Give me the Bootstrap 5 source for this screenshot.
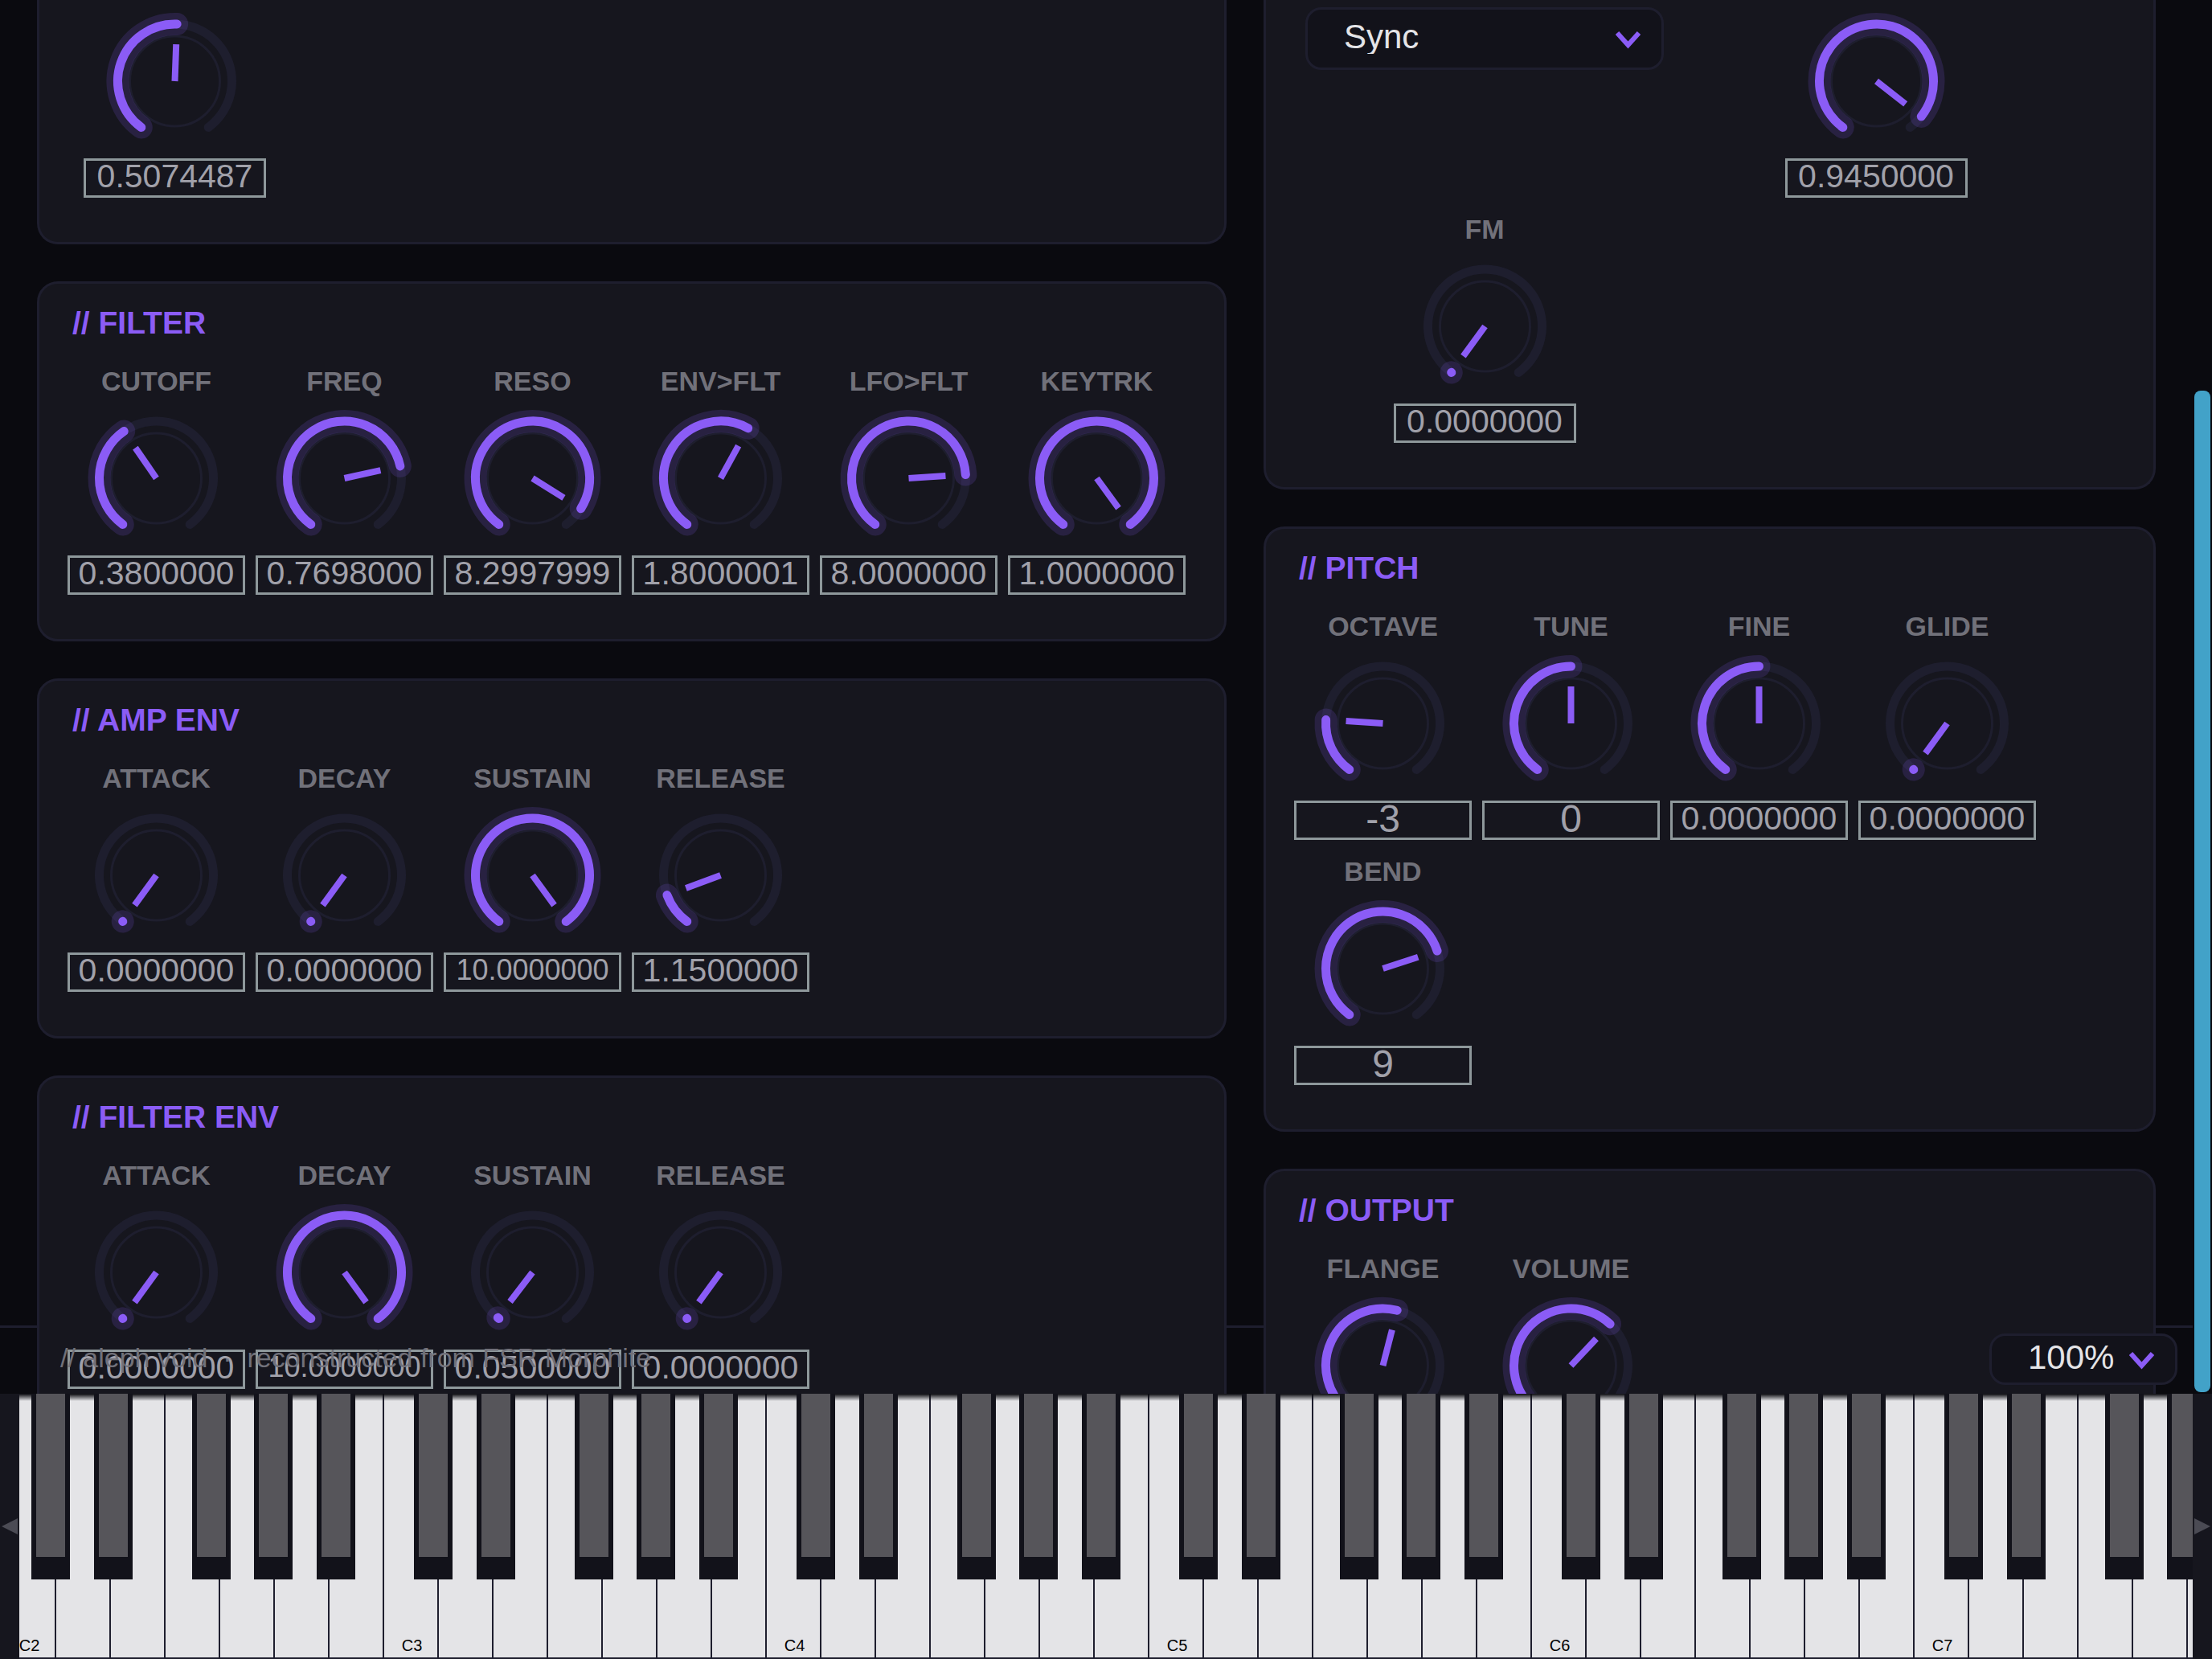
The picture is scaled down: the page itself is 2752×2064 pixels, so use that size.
<!DOCTYPE html>
<html lang="en">
<head>
<meta charset="utf-8">
<meta name="viewport" content="width=device-width, initial-scale=1">
<title>aleph void</title>
<link href="https://cdn.jsdelivr.net/npm/bootstrap@5.3.0/dist/css/bootstrap.min.css" rel="stylesheet">
<style>
  :root { --void: #0a0a0f; --panel: #16161e; --line: #1e1e2e; --accent: #8b5cf6; --field: #12121a; }
  body { background: var(--void); font-family: "Liberation Sans", Arial, sans-serif; line-height: 1; }
  main { min-height: 0; }
  .col-left { flex: 4 1 0; min-width: 0; }
  .col-right { flex: 3 1 0; min-width: 0; }
  .deck { gap: 46px; padding: 0 46px; z-index: 1; }
  .stack { gap: 46px; }
  .panel { background: var(--panel); border: 3px solid var(--line); border-radius: 26px; padding: 16px 35px 55px; }
  .panel-cut { border-top: 0; border-top-left-radius: 0; border-top-right-radius: 0; padding-top: 6px; }
  .panel h2 { color: var(--accent); font-size: 39px; font-weight: 700; line-height: 66px; margin: 0 6px 13px; }
  .knobs { column-gap: 13px; row-gap: 13px; }
  .knob { width: 221px; }
  .knob-title { color: #71717a; font-size: 34px; font-weight: 700; line-height: 52px; }
  .dial { height: 191px; }
  .dial svg { width: 221px; height: 191px; }
  .dial input { opacity: 0; cursor: pointer; }
  .readout { width: 100%; height: 49px; background: transparent; border: 3px solid #8e989b; border-radius: 0; color: #a1a1aa; font-size: 41px; text-align: center; padding: 0 0 5px; outline: 0; }
  .readout-whole { font-size: 48px; }
  .readout-long { font-size: 36px; }
  .slot-narrow { width: 267px; }
  .slot-wide { width: 474px; }
  .slot-narrow .knob, .slot-wide .knob { width: 227px; }
  .picker select { appearance: none; width: 100%; height: 100%; background: var(--field); border: 3px solid var(--line); border-radius: 20px; color: #e4e4e7; font-size: 42px; padding: 0 45px 5px; outline: 0; }
  .picker svg { right: 29px; top: 50%; transform: translateY(-50%); pointer-events: none; }
  .picker-mode { width: 446px; height: 78px; margin-top: 3px; }
  .picker-zoom { width: 234px; height: 64px; right: 19px; bottom: 11px; z-index: 3; }
  .foot-line { height: 85px; border-top: 3px solid var(--line); z-index: 0; }
  .foot-note { left: 75px; bottom: 25px; font-size: 34px; line-height: 40px; color: #71717a; z-index: 2; white-space: pre; }
  .track { width: 24px; padding: 486px 2px 2px; }
  .thumb { background: #42a2c8; border-radius: 8px; }
  .keyboard { height: 330px; }
  .shift { width: 24px; background: var(--panel); border: 0; padding: 0; z-index: 2; }
  .keys { background: #e4e4e7; }
  .strip { margin-left: -24px; }
  .octave { width: 476px; }
  .white-key { width: 68px; border-left: 2px solid var(--line); border-bottom: 2px solid var(--line); background: #e4e4e7; color: #000; padding: 0 0 1px 3px; font-size: 20px; line-height: 28px; }
  .black-key { width: 48px; height: 231px; top: 0; background: var(--field); padding: 0 6px 28px; z-index: 1; }
  .black-key::before { content: ""; display: block; height: 100%; background: #56555a; }
  .n1 { left: 39px; } .n2 { left: 117px; } .n3 { left: 239px; } .n4 { left: 316px; } .n5 { left: 394px; }
  .shade { height: 9px; background: linear-gradient(#0a0a0f, #0a0a0f00); }
</style>
<script src="https://cdn.jsdelivr.net/npm/bootstrap@5.3.0/dist/js/bootstrap.bundle.min.js"></script>
</head>
<body class="vh-100 d-flex flex-column overflow-hidden">

<main class="flex-fill d-flex overflow-hidden position-relative">
  <div class="flex-fill position-relative overflow-hidden">
    <div class="foot-line position-absolute bottom-0 start-0 end-0"></div>

    <div class="deck d-flex align-items-start position-relative">
      <div class="col-left stack d-flex flex-column">
        <section class="panel panel-cut">
          <div class="slot-narrow d-flex justify-content-center" data-knobs='[["","0.5074487",0.5074]]'></div>
        </section>
        <section class="panel">
          <h2>// FILTER</h2>
          <div class="knobs d-flex flex-wrap" data-knobs='[["CUTOFF","0.3800000",0.38],["FREQ","0.7698000",0.7698],["RESO","8.2997999",0.924],["ENV&gt;FLT","1.8000001",0.6],["LFO&gt;FLT","8.0000000",0.8],["KEYTRK","1.0000000",1]]'></div>
        </section>
        <section class="panel">
          <h2>// AMP ENV</h2>
          <div class="knobs d-flex flex-wrap" data-knobs='[["ATTACK","0.0000000",0],["DECAY","0.0000000",0],["SUSTAIN","10.0000000",1],["RELEASE","1.1500000",0.117]]'></div>
        </section>
        <section class="panel">
          <h2>// FILTER ENV</h2>
          <div class="knobs d-flex flex-wrap" data-knobs='[["ATTACK","0.0000000",0],["DECAY","10.0000000",1],["SUSTAIN","0.0500000",0.005],["RELEASE","0.0000000",0]]'></div>
        </section>
      </div>

      <div class="col-right stack d-flex flex-column">
        <section class="panel panel-cut">
          <div class="knobs d-flex flex-wrap">
            <div class="slot-wide d-flex justify-content-center">
              <div class="picker picker-mode position-relative">
                <select aria-label="Oscillator mode"><option>Sync</option></select>
                <svg class="position-absolute" width="31" height="26" viewBox="-1 -5 31 26" fill="none" stroke="#8b5cf6" stroke-width="6"><path d="M1 1L14.500 16L28 1"/></svg>
              </div>
            </div>
            <div class="slot-wide d-flex justify-content-center" data-knobs='[["","0.9450000",0.945]]'></div>
            <div class="slot-wide d-flex justify-content-center" data-knobs='[["FM","0.0000000",0]]'></div>
          </div>
        </section>
        <section class="panel">
          <h2>// PITCH</h2>
          <div class="knobs d-flex flex-wrap" data-knobs='[["OCTAVE","-3",0.2],["TUNE","0",0.5],["FINE","0.0000000",0.5],["GLIDE","0.0000000",0],["BEND","9",0.75]]'></div>
        </section>
        <section class="panel">
          <h2>// OUTPUT</h2>
          <div class="knobs d-flex flex-wrap" data-knobs='[["FLANGE","0.5500000",0.55],["VOLUME","0.6500000",0.65]]'></div>
        </section>
      </div>
    </div>

    <div class="foot-note position-absolute">// aleph void  ·  reconstructed from FSR Morphite</div>
    <div class="picker picker-zoom position-absolute">
      <select aria-label="Zoom"><option>100%</option></select>
      <svg class="position-absolute" width="31" height="26" viewBox="-1 -5 31 26" fill="none" stroke="#8b5cf6" stroke-width="6"><path d="M1 1L14.500 16L28 1"/></svg>
    </div>
  </div>
  <div class="track d-flex flex-shrink-0"><div class="thumb flex-fill"></div></div>
</main>

<div class="keyboard d-flex flex-shrink-0">
  <button class="shift flex-shrink-0" type="button" aria-label="Lower octaves"><svg class="d-block" width="24" height="20" viewBox="0 0 24 20"><path d="M22 0V20L2 10Z" fill="#4b4b54"/></svg></button>
  <div class="keys flex-fill overflow-hidden position-relative">
    <div class="strip d-flex h-100" id="strip"></div>
    <div class="shade position-absolute top-0 start-0 end-0"></div>
  </div>
  <button class="shift flex-shrink-0" type="button" aria-label="Higher octaves"><svg class="d-block" width="24" height="20" viewBox="0 0 24 20"><path d="M2 0V20L22 10Z" fill="#4b4b54"/></svg></button>
</div>

<script>
  // Dials sweep 288 degrees, from 144 left of the top to 144 right of it.
  const CX = 110.5, CY = 95, R = 71;
  const at = (deg, r) => {
    const a = deg * Math.PI / 180;
    return (CX + r * Math.sin(a)).toFixed(2) + ' ' + (CY - r * Math.cos(a)).toFixed(2);
  };
  const arc = (to) => `M${at(-144, R)}A${R} ${R} 0 ${to + 144 > 180 ? 1 : 0} 1 ${at(to, R)}`;
  const sizeOf = (text) => text.length < 3 ? 'readout-whole' : text.length > 9 ? 'readout-long' : '';
  let id = 0;
  const knob = ([name, text, level]) => {
    const end = level * 288 - 144, live = arc(Math.max(end, -143.9)), key = 'k' + (++id);
    const title = name ? `<label class="knob-title d-block text-center" for="${key}">${name.replace('>', '&gt;')}</label>` : '';
    return `<div class="knob">${title}
      <div class="dial position-relative d-flex justify-content-center">
        <svg viewBox="0 0 221 191" fill="none" stroke-linecap="round">
          <path d="${arc(144)}" stroke="#1e1e2e" stroke-width="11"/>
          <circle cx="${CX}" cy="${CY}" r="56" stroke="#1e1e2e" stroke-width="3"/>
          <path d="${live}" stroke="#8b5cf6" stroke-opacity=".16" stroke-width="28"/>
          <path d="${live}" stroke="#8b5cf6" stroke-width="11"/>
          <path d="M${CX} ${CY}L${at(end, 46)}" stroke="#8b5cf6" stroke-width="8" stroke-linecap="butt"/>
        </svg>
        <input class="position-absolute w-100 h-100" type="range" min="0" max="1" step="any" value="${level}" id="${key}" aria-label="${name || 'Level'}">
      </div>
      <input class="readout d-block ${sizeOf(text)}" type="text" value="${text}" aria-label="${name || 'Level'} value">
    </div>`;
  };
  document.querySelectorAll('[data-knobs]').forEach((row) => {
    row.innerHTML = JSON.parse(row.dataset.knobs).map(knob).join('');
  });

  // Piano strip: seven white keys and five black ones per octave.
  let html = '';
  for (let o = 2; o < 8; o++) {
    html += '<div class="octave d-flex flex-shrink-0 position-relative">';
    for (let w = 0; w < 7; w++) html += `<div class="white-key d-flex align-items-end justify-content-center">${w ? '' : 'C' + o}</div>`;
    for (let b = 1; b < 6; b++) html += `<div class="black-key position-absolute n${b}"></div>`;
    html += '</div>';
  }
  document.getElementById('strip').innerHTML = html;
</script>
</body>
</html>
